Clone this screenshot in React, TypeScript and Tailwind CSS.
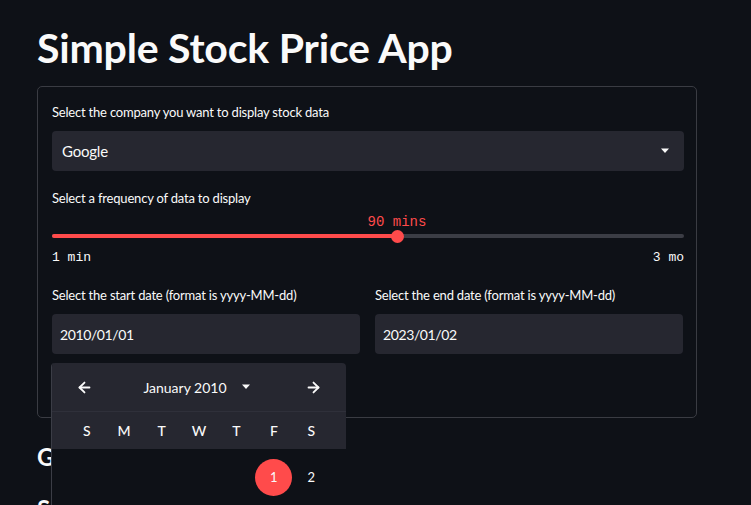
import React from "react";
import { ArrowLeft, ArrowRight } from "lucide-react";

const sans = "font-['Lato','Liberation_Sans',sans-serif]";
const mono = "font-['Liberation_Mono','DejaVu_Sans_Mono',monospace]";

const Caret = () => (
  <svg width="10" height="6" viewBox="0 0 10 6" className="fill-[#fafafa]">
    <path d="M1 0.5h8L5 5z" />
  </svg>
);

const FieldLabel = ({
  children,
  className = "mb-[9px]",
}: {
  children: React.ReactNode;
  className?: string;
}) => (
  <label
    className={`block text-[13px] leading-[20px] tracking-[-0.2px] text-[#fafafa] ${className}`}
  >
    {children}
  </label>
);

const weekDays = ["S", "M", "T", "W", "T", "F", "S"];

const CalendarPopover = () => (
  <div className="absolute left-[-1px] top-[calc(100%+9px)] w-[295px] border-l border-[#3b3d46] rounded-t-[4px] overflow-hidden z-10">
    <div className="bg-[#262730] h-[48px] flex items-center justify-between px-[24px]">
      <ArrowLeft size={17} strokeWidth={2.6} className="text-[#fafafa]" />
      <div className="flex items-center gap-[14px] text-[14px] text-[#fafafa] -ml-[4px]">
        <span>January 2010</span>
        <Caret />
      </div>
      <ArrowRight size={17} strokeWidth={2.6} className="text-[#fafafa]" />
    </div>
    <div className="bg-[#262730] border-t border-[#2f303a] h-[38px] grid grid-cols-7 items-center px-[16px]">
      {weekDays.map((d, i) => (
        <span key={i} className="text-center text-[14px] font-medium text-[#fafafa]">
          {d}
        </span>
      ))}
    </div>
    <div className="bg-[#0e1117] h-[80px] grid grid-cols-7 content-start px-[16px] pt-[10px]">
      {[0, 1, 2, 3, 4].map((i) => (
        <span key={i} />
      ))}
      <div className="flex justify-center">
        <span className="w-[37px] h-[37px] rounded-full bg-[#ff4b4b] text-[#fafafa] text-[13px] flex items-center justify-center">
          1
        </span>
      </div>
      <div className="flex justify-center items-center h-[37px] text-[13px] text-[#fafafa]">
        2
      </div>
    </div>
  </div>
);

export default function App() {
  return (
    <div className={`min-h-screen bg-[#0e1117] text-[#fafafa] ${sans} overflow-hidden`}>
      <div className="pl-[37px] pt-[24px]">
        <h1 className="text-[41px] font-bold leading-[48px] tracking-[-0.2px] mb-[14px]">
          Simple Stock Price App
        </h1>

        <div className="w-[660px] border border-[#3a3c43] rounded-[5px] pl-[14px] pr-[12px] pt-[15px] pb-[63px]">
          <FieldLabel>Select the company you want to display stock data</FieldLabel>
          <div className="h-[40px] bg-[#262730] rounded-[4px] flex items-center justify-between pl-[10px] pr-[14px]">
            <span className="text-[15px] tracking-[-0.2px]">Google</span>
            <Caret />
          </div>

          <div className="mt-[17px]">
            <FieldLabel className="">Select a frequency of data to display</FieldLabel>
            <div className="relative h-[61px]">
              <div className="absolute top-[6px] left-[345px] -translate-x-1/2 text-[14px] leading-[14px] text-[#ff4b4b] whitespace-nowrap">
                <span className={mono}>90 mins</span>
              </div>
              <div className="absolute top-[26px] left-0 right-0 h-[4px] rounded-full bg-[#3b3d45]">
                <div className="h-full w-[345px] rounded-full bg-[#ff4b4b]" />
              </div>
              <div className="absolute top-[21.5px] left-[338.5px] w-[13px] h-[13px] rounded-full bg-[#ff4b4b]" />
              <div className={`absolute top-[43px] left-0 right-0 flex justify-between text-[13px] leading-[14px] ${mono}`}>
                <span>1 min</span>
                <span>3 mo</span>
              </div>
            </div>
          </div>

          <div className="mt-[16px] flex gap-[15px]">
            <div className="w-[308px]">
              <FieldLabel>Select the start date (format is yyyy-MM-dd)</FieldLabel>
              <div className="relative">
                <div className="h-[40px] bg-[#262730] rounded-[4px] flex items-center pl-[8px] text-[14px] tracking-[-0.4px]">
                  2010/01/01
                </div>
                <CalendarPopover />
              </div>
            </div>
            <div className="w-[308px]">
              <FieldLabel>Select the end date (format is yyyy-MM-dd)</FieldLabel>
              <div className="h-[40px] bg-[#262730] rounded-[4px] flex items-center pl-[8px] text-[14px] tracking-[-0.4px]">
                2023/01/02
              </div>
            </div>
          </div>
        </div>

        <h2 className="mt-[24px] text-[24px] font-bold leading-[30px]">Google Stock Price</h2>
        <p className="mt-[22px] text-[24px] font-bold leading-[30px]">Stock closing price</p>
      </div>
    </div>
  );
}
